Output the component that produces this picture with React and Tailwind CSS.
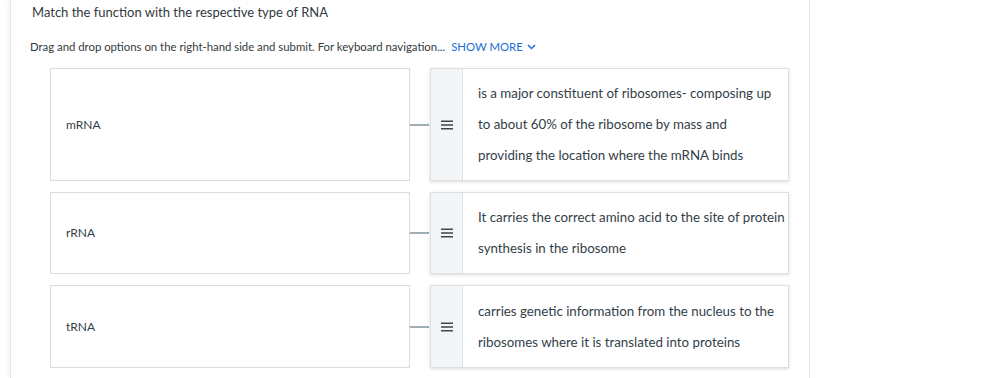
import React from "react";

const rows = [
	{
		term: "mRNA",
		h: "h-[113px]",
		lines: ["is a major constituent of ribosomes- composing up", "to about 60% of the ribosome by mass and", "providing the location where the mRNA binds"],
	},
	{
		term: "rRNA",
		h: "h-[82px]",
		lines: ["It carries the correct amino acid to the site of protein", "synthesis in the ribosome"],
	},
	{
		term: "tRNA",
		h: "h-[83px]",
		lines: ["carries genetic information from the nucleus to the", "ribosomes where it is translated into proteins"],
	},
];

function Handle() {
	return (
		<div className="w-[32px] shrink-0 bg-[#f4f5f6] border-r border-[#dcdfe3] flex items-center justify-center">
			<svg width="12" height="10" viewBox="0 0 12 10">
				<rect x="0" y="0.5" width="12" height="1.5" fill="#3c4650" />
				<rect x="0" y="4.25" width="12" height="1.5" fill="#3c4650" />
				<rect x="0" y="8" width="12" height="1.5" fill="#3c4650" />
			</svg>
		</div>
	);
}

export default function App() {
	return (
		<div className="w-[996px] h-[378px] bg-white overflow-hidden font-['Lato',sans-serif]">
			<div className="ml-[10px] w-[800px] h-full border-x border-[#e3e4e6] shadow-[-2px_0_3px_rgba(0,0,0,0.04)]">
				<h1 className="pl-[21px] pt-[4px] text-[13px] leading-[16px] text-[#333a40]">Match the function with the respective type of RNA</h1>

				<div className="pl-[19px] mt-[20px] flex items-center text-[11.35px] leading-[14px] text-[#333a40]">
					<span>Drag and drop options on the right-hand side and submit. For keyboard navigation...</span>
					<span className="ml-[6px] text-[#1a6ed8] flex items-center gap-[4px]">
						SHOW MORE
						<svg width="9" height="6" viewBox="0 0 9 6">
							<path d="M1 1l3.5 3.5L8 1" fill="none" stroke="#1a6ed8" strokeWidth="1.5" />
						</svg>
					</span>
				</div>

				<div className="mt-[14px] pl-[39px] flex flex-col gap-[11px]">
					{rows.map((row) => (
						<div key={row.term} className={`flex items-stretch ${row.h}`}>
							<div className="w-[360px] border border-[#d9dce0] flex items-center pl-[15px] text-[12px] text-[#333e48]">{row.term}</div>
							<div className="w-[20px] flex items-center">
								<div className="w-[19px] h-[2px] bg-[#9fadb7]"></div>
							</div>
							<div className="w-[359px] flex border border-[#dcdfe3] shadow-[0_1px_3px_rgba(0,0,0,0.15)] bg-white">
								<Handle />
								<div className="flex flex-col justify-center pl-[15px] text-[13.3px] leading-[31px] text-[#333e48]">
									{row.lines.map((l) => (
										<div key={l}>{l}</div>
									))}
								</div>
							</div>
						</div>
					))}
				</div>
			</div>
		</div>
	);
}
